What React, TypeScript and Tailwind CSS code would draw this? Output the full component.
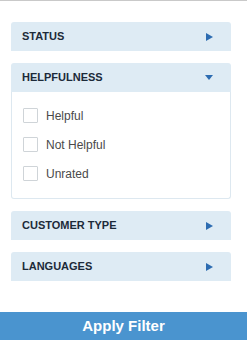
import React, { useState } from 'react';

const sections = ['STATUS', 'HELPFULNESS', 'CUSTOMER TYPE', 'LANGUAGES'];
const helpfulOptions = ['Helpful', 'Not Helpful', 'Unrated'];

const Caret = ({ open }: { open: boolean }) =>
  open ? (
    <svg width="8" height="5" viewBox="0 0 8 5" className="block">
      <path d="M0 0 H8 L4 5 Z" fill="#2d6cb1" />
    </svg>
  ) : (
    <svg width="7" height="8" viewBox="0 0 7 8" className="block">
      <path d="M0 0 V8 L7 4 Z" fill="#2d6cb1" />
    </svg>
  );

const App = () => {
  const [openSection, setOpenSection] = useState<string | null>('HELPFULNESS');
  const [checked, setChecked] = useState<Record<string, boolean>>({});

  return (
    <div className="w-[247px] h-[340px] bg-white flex flex-col border-t border-[#c9c9c9] font-['Liberation_Sans',Arial,sans-serif]">
      <div className="flex flex-col gap-[12px] pl-[11px] pr-[16px] pt-[21px]">
        {sections.map((name) => {
          const open = openSection === name;
          return (
            <div key={name} className="flex flex-col">
              <button
                onClick={() => setOpenSection(open ? null : name)}
                className="h-[29px] bg-[#deebf4] rounded-t-[3px] flex items-center justify-between pl-[11px] pr-[18px] text-[11px] font-bold text-[#1c2a39] text-left"
              >
                <span>{name}</span>
                <Caret open={open} />
              </button>
              {open && (
                <div className="border border-t-0 border-[#dde8f0] rounded-b-[3px] pt-[16px] pb-[17px] pl-[11px] flex flex-col gap-[14px]">
                  {helpfulOptions.map((opt) => (
                    <label key={opt} className="flex items-center gap-[8px] h-[15px] cursor-pointer">
                      <input
                        type="checkbox"
                        checked={!!checked[opt]}
                        onChange={() => setChecked({ ...checked, [opt]: !checked[opt] })}
                        className="appearance-none w-[15px] h-[15px] border border-[#cfd4d8] rounded-[1px] bg-white checked:bg-[#4a93cf]"
                      />
                      <span className="text-[12px] text-[#4a4a4a]">{opt}</span>
                    </label>
                  ))}
                </div>
              )}
            </div>
          );
        })}
      </div>
      <button className="mt-auto h-[28px] w-full bg-[#4a94cf] text-white font-bold text-[15px] flex items-center justify-center">
        Apply Filter
      </button>
    </div>
  );
};

export default App;
